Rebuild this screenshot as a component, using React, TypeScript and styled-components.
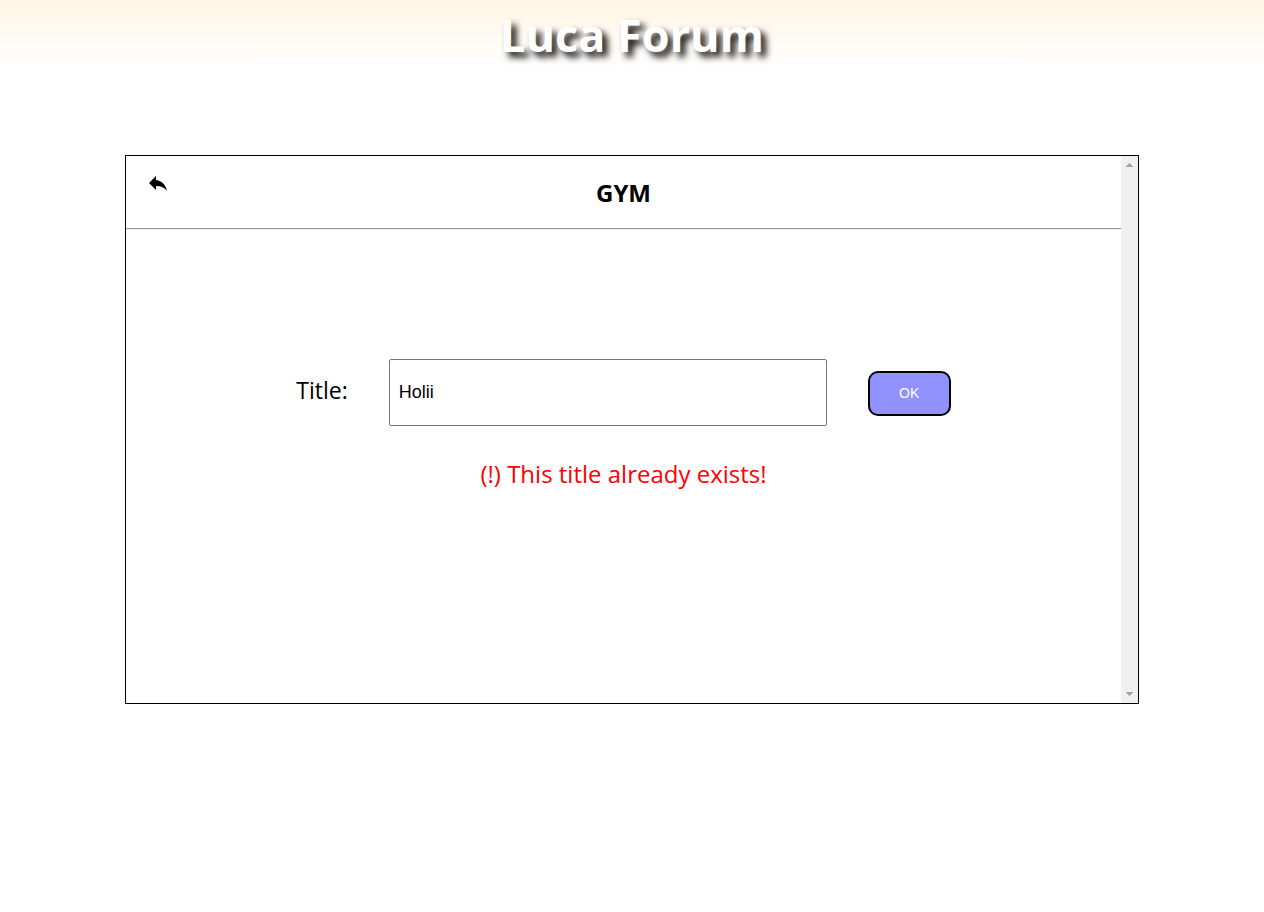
import React, { useState } from "react";
import styled, { createGlobalStyle } from "styled-components";
import { MdReply } from "react-icons/md";

const GlobalStyle = createGlobalStyle`
  *, *::before, *::after { box-sizing: border-box; }
  body {
    margin: 0;
    background: #fff;
    color: #000;
    font-family: "Open Sans", "Noto Sans", sans-serif;
  }
`;

const Header = styled.header`
  height: 70px;
  background: linear-gradient(#fff5e4, #fff);
  text-align: center;
`;

const SiteTitle = styled.h1`
  margin: 0;
  font-size: 45px;
  line-height: 70px;
  font-weight: 700;
  color: #fff;
  text-shadow: 5px 5px 7px #000;
`;

const Panel = styled.main`
  display: flex;
  width: calc(80% + 3px);
  height: calc(60vh + 2px);
  margin: 85px auto 0;
  border: 1px solid #000;
`;

const Content = styled.div`
  flex: 1;
  min-width: 0;
`;

const TopicBar = styled.div`
  display: grid;
  grid-template-columns: 64px 1fr 64px;
  height: 74px;
  border-bottom: 1px solid #eee;
  box-shadow: inset 0 -1px #9a9a9a;
`;

const BackButton = styled.button`
  display: flex;
  align-self: start;
  justify-self: start;
  margin: 15px 0 0 20px;
  padding: 0;
  border: 0;
  background: none;
  color: #000;
`;

const TopicName = styled.h2`
  margin: 0;
  font-size: 24px;
  line-height: 74px;
  font-weight: 700;
  text-align: center;
`;

const TitleForm = styled.form`
  display: flex;
  align-items: center;
  justify-content: center;
  gap: 41px;
  margin-top: 129px;
`;

const Label = styled.label`
  padding-bottom: 6px;
  font-size: 23px;
  line-height: 32px;
  font-weight: 400;
`;

const TitleInput = styled.input`
  width: 44%;
  height: 67px;
  padding: 0 9px;
  border: 1px solid #767676;
  border-radius: 2px;
  background: #fff;
  color: #000;
  font-family: "Liberation Sans", Arial, sans-serif;
  font-size: 18px;
`;

const OkButton = styled.button`
  width: 83px;
  height: 45px;
  margin-top: 2px;
  padding: 0 0 2px;
  border: 2px solid #000;
  border-radius: 10px;
  background: #9191ff;
  color: #fff;
  font-family: "Liberation Sans", Arial, sans-serif;
  font-size: 14px;
`;

const ErrorMessage = styled.p`
  margin: 32px 0 0;
  color: #f00;
  font-size: 24px;
  line-height: 32px;
  font-weight: 400;
  text-align: center;
`;

const ScrollTrack = styled.div`
  display: flex;
  flex-direction: column;
  align-items: center;
  justify-content: space-between;
  width: 17px;
  padding: 7px 0;
  background: #f0f0f0;
`;

const ScrollArrow = styled.svg`
  display: block;
  width: 7px;
  height: 4px;
  fill: #a3a3a3;
  shape-rendering: crispEdges;
`;

export default function App() {
  const [title, setTitle] = useState("Holii");

  return (
    <>
      <GlobalStyle />
      <Header>
        <SiteTitle>Luca Forum</SiteTitle>
      </Header>
      <Panel>
        <Content>
          <TopicBar>
            <BackButton type="button" aria-label="Back">
              <MdReply size={24} />
            </BackButton>
            <TopicName>GYM</TopicName>
          </TopicBar>
          <TitleForm onSubmit={(e: React.FormEvent) => e.preventDefault()}>
            <Label htmlFor="title">Title:</Label>
            <TitleInput
              id="title"
              type="text"
              value={title}
              aria-describedby="title-error"
              onChange={(e: React.ChangeEvent<HTMLInputElement>) => setTitle(e.target.value)}
            />
            <OkButton type="submit">OK</OkButton>
          </TitleForm>
          <ErrorMessage id="title-error">(!) This title already exists!</ErrorMessage>
        </Content>
        <ScrollTrack aria-hidden="true">
          <ScrollArrow viewBox="0 0 7 4">
            <path d="M3 0H4V1H5V2H6V3H7V4H0V3H1V2H2V1H3Z" />
          </ScrollArrow>
          <ScrollArrow viewBox="0 0 7 4">
            <path d="M0 0H7V1H6V2H5V3H4V4H3V3H2V2H1V1H0Z" />
          </ScrollArrow>
        </ScrollTrack>
      </Panel>
    </>
  );
}
